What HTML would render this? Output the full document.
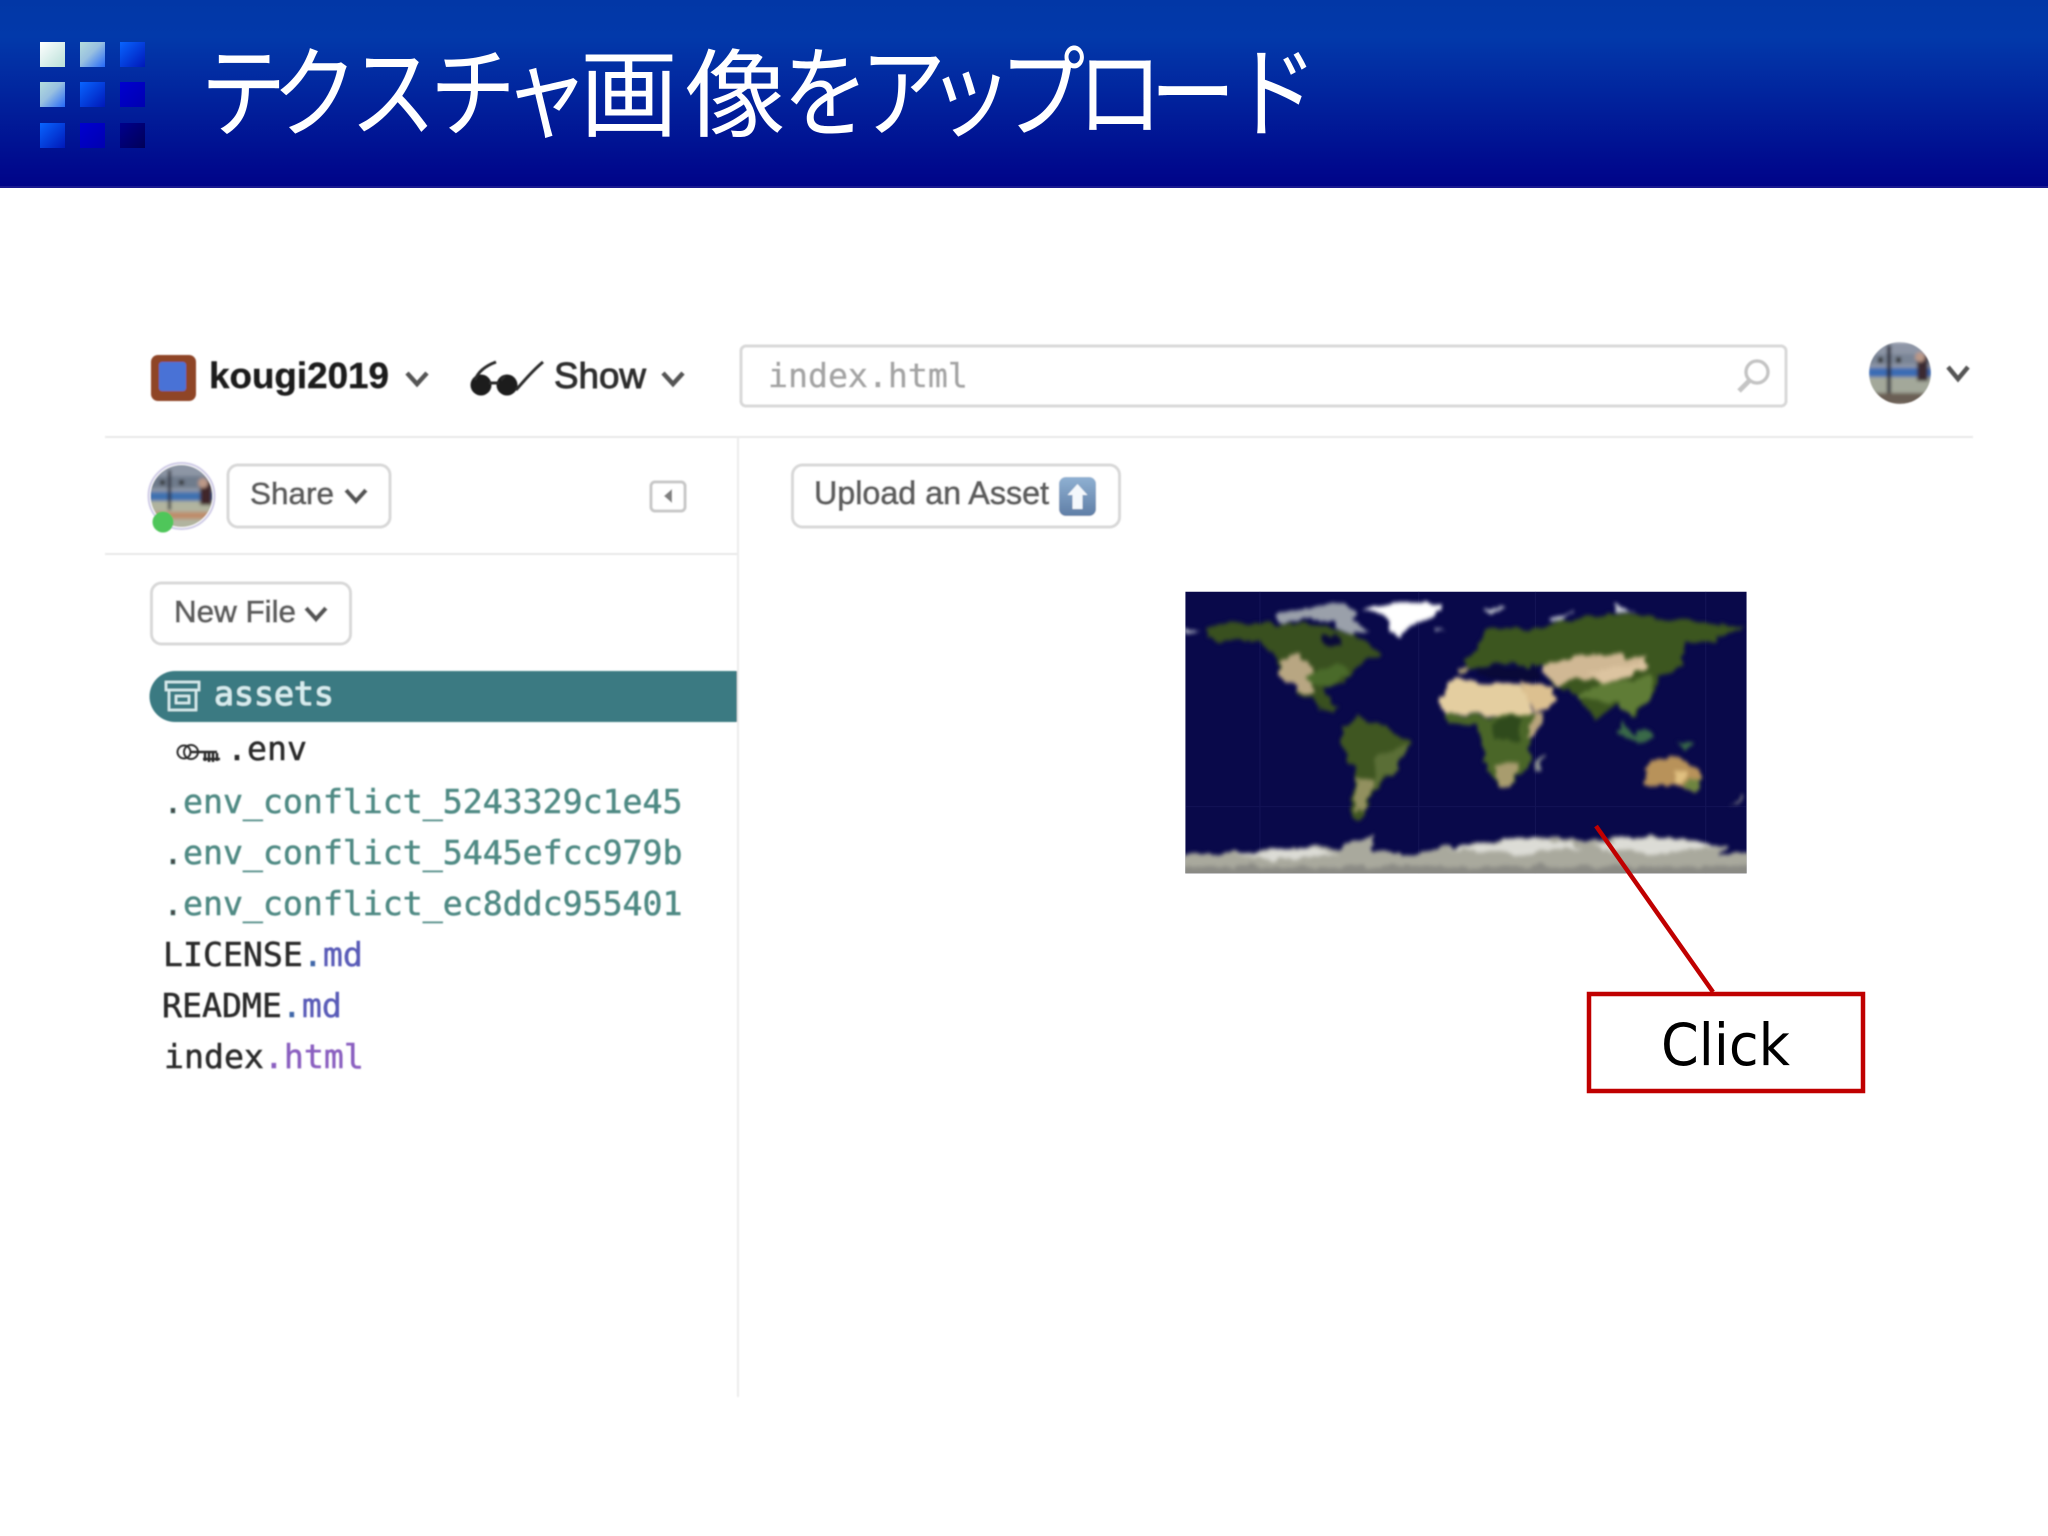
<!DOCTYPE html>
<html lang="ja"><head><meta charset="utf-8"><title>テクスチャ画像をアップロード</title>
<style>
html,body{margin:0;padding:0;background:#fff;width:2048px;height:1536px;overflow:hidden}
svg{display:block;position:absolute;left:0;top:0}
.s{font-family:"Liberation Sans",sans-serif}
.m{font-family:"DejaVu Sans Mono","Liberation Mono",monospace;font-size:33.2px;stroke-width:.5px}
.j{font-family:"Noto Sans CJK JP","Liberation Sans",sans-serif;fill:#fff}
</style></head><body>
<svg width="2048" height="1536" viewBox="0 0 2048 1536" xmlns="http://www.w3.org/2000/svg">
<defs>
<linearGradient id="hd" x1="0" y1="0" x2="0" y2="1"><stop offset="0" stop-color="#0237a6"/><stop offset=".2" stop-color="#0239aa"/><stop offset=".92" stop-color="#00088c"/><stop offset="1" stop-color="#000488"/></linearGradient>
<linearGradient id="a1" x1="0" y1="0" x2="1" y2="1"><stop offset="0" stop-color="#fff"/><stop offset="1" stop-color="#b8e0d8"/></linearGradient>
<linearGradient id="a2" x1="0" y1="0" x2="1" y2="1"><stop offset="0" stop-color="#b4dcdc"/><stop offset=".45" stop-color="#98c0e0"/><stop offset="1" stop-color="#2468f8"/></linearGradient>
<linearGradient id="a3" x1="0" y1="0" x2="1" y2="1"><stop offset="0" stop-color="#0864ff"/><stop offset="1" stop-color="#0018b8"/></linearGradient>
<linearGradient id="a4" x1="0" y1="0" x2="1" y2="1"><stop offset="0" stop-color="#0000d0"/><stop offset="1" stop-color="#0000b0"/></linearGradient>
<linearGradient id="a5" x1="0" y1="0" x2="1" y2="1"><stop offset="0" stop-color="#00008c"/><stop offset="1" stop-color="#000058"/></linearGradient>
<linearGradient id="up" x1="0" y1="0" x2="0" y2="1"><stop offset="0" stop-color="#8fb0d2"/><stop offset="1" stop-color="#5f7ea6"/></linearGradient>
<filter id="b1" x="-2%" y="-2%" width="104%" height="104%"><feGaussianBlur stdDeviation=".85"/></filter>
<filter id="b3" x="-10%" y="-10%" width="120%" height="120%"><feGaussianBlur stdDeviation="1.6"/></filter>
<filter id="b2" x="-5%" y="-5%" width="110%" height="110%" color-interpolation-filters="sRGB">
<feTurbulence type="fractalNoise" baseFrequency=".022 .03" numOctaves="3" seed="7" result="n"/>
<feDisplacementMap in="SourceGraphic" in2="n" scale="34" xChannelSelector="R" yChannelSelector="G"/>
<feGaussianBlur stdDeviation="5 6"/></filter>
<clipPath id="mp"><rect x="40" y="35" width="1467" height="845"/></clipPath>
<clipPath id="c1"><circle cx="181.5" cy="496" r="31"/></clipPath>
<clipPath id="c2"><circle cx="1900" cy="373" r="31"/></clipPath>
</defs>

<!-- header -->
<rect x="0" y="0" width="2048" height="187" fill="url(#hd)"/>
<rect x="0" y="186" width="2048" height="2" fill="#1a1a90"/>
<rect x="40" y="42" width="25" height="25" fill="url(#a1)"/><rect x="80" y="42" width="25" height="25" fill="url(#a2)"/><rect x="120" y="42" width="25" height="25" fill="url(#a3)"/>
<rect x="40" y="82" width="25" height="25" fill="url(#a2)"/><rect x="80" y="82" width="25" height="25" fill="url(#a3)"/><rect x="120" y="82" width="25" height="25" fill="url(#a4)"/>
<rect x="40" y="123" width="25" height="25" fill="url(#a3)"/><rect x="80" y="123" width="25" height="25" fill="url(#a4)"/><rect x="120" y="123" width="25" height="25" fill="url(#a5)"/>
<text class="j" transform="scale(.86 1)" y="129" x="233 316 407 500 585" font-size="100">テクスチャ</text>
<text class="j" transform="translate(580 0) scale(1.02 1)" y="129" x="0" font-size="96">画</text>
<text class="j" transform="translate(685 0) scale(1.05 1)" y="129" x="0" font-size="96">像</text>
<text class="j" transform="scale(.86 1)" y="129" x="910 1000 1078 1162 1252 1337 1432" font-size="100">をアップロード</text>

<!-- app -->
<g filter="url(#b1)">
<rect x="105" y="436" width="1868" height="2" fill="#e8e8e8"/>
<rect x="105" y="553" width="633" height="2" fill="#e8e8e8"/>
<rect x="737" y="437" width="2" height="960" fill="#ececec"/>

<rect x="151" y="355" width="45" height="46" rx="7" fill="#8f4527"/>
<rect x="159" y="362" width="27" height="29" rx="3" fill="#4a72d6"/>
<text class="s" x="209" y="388" font-size="36" font-weight="700" fill="#1c1c1c" stroke="#1c1c1c" stroke-width=".4" textLength="180" lengthAdjust="spacingAndGlyphs">kougi2019</text>
<path d="M407 373l10 11 10-11" fill="none" stroke="#555" stroke-width="4.500"/>

<circle cx="481" cy="385" r="10.500" fill="#1e1e1e"/><circle cx="507" cy="385" r="10.500" fill="#1e1e1e"/>
<path d="M475 380c3-8 10-14 21-18M501 380l4-4M516 390c8-9 16-19 27-28M489 383h10" fill="none" stroke="#2a2a2a" stroke-width="3"/>
<text class="s" x="554" y="388" font-size="36" fill="#2e2e2e" stroke="#2e2e2e" stroke-width=".9" textLength="92" lengthAdjust="spacingAndGlyphs">Show</text>
<path d="M663 373l10 11 10-11" fill="none" stroke="#555" stroke-width="4.500"/>

<rect x="741" y="346" width="1045" height="60" rx="5" fill="#fff" stroke="#d8d8d8" stroke-width="3"/>
<text class="m" x="768" y="387" fill="#a4a4a4" stroke="#a4a4a4">index.html</text>
<circle cx="1757" cy="372" r="11" fill="none" stroke="#c4c4c4" stroke-width="3.500"/>
<path d="M1749 381l-10 10" stroke="#c4c4c4" stroke-width="5" fill="none"/>

<g clip-path="url(#c2)"><g filter="url(#b3)">
<rect x="1868" y="342" width="64" height="62" fill="#8d95a6"/>
<rect x="1868" y="354" width="64" height="10" fill="#7a8596"/>
<rect x="1868" y="368" width="64" height="9" fill="#3a6cb4"/>
<rect x="1868" y="377" width="64" height="28" fill="#a3a89a"/>
<rect x="1887" y="345" width="4" height="50" fill="#2c2c38"/><rect x="1878" y="357" width="5" height="6" fill="#333"/><rect x="1896" y="357" width="5" height="6" fill="#333"/>
<rect x="1917" y="355" width="11" height="26" fill="#3a2a30"/><circle cx="1920" cy="357" r="5" fill="#b98"/>
<rect x="1868" y="393" width="64" height="12" fill="#6b5f55"/>
</g></g>
<path d="M1948 367l10 12 10-12" fill="none" stroke="#555" stroke-width="4.500"/>

<circle cx="181.5" cy="496" r="33" fill="#fff" stroke="#cfcbe6" stroke-width="2"/>
<g clip-path="url(#c1)"><g filter="url(#b3)">
<rect x="148" y="462" width="68" height="68" fill="#8d96a5"/>
<rect x="148" y="476" width="68" height="12" fill="#6f7b8c"/>
<rect x="148" y="492" width="68" height="9" fill="#3f72b0"/>
<rect x="148" y="501" width="68" height="30" fill="#b1b49f"/>
<rect x="168" y="470" width="3" height="40" fill="#2c2c38"/><rect x="160" y="480" width="5" height="5" fill="#333"/><rect x="179" y="480" width="5" height="5" fill="#333"/>
<rect x="200" y="481" width="12" height="24" fill="#40282c"/><circle cx="203" cy="483" r="5" fill="#b98"/>
<rect x="155" y="512" width="60" height="7" fill="#c27a55" opacity=".7"/>
</g></g>
<circle cx="163" cy="522" r="10.500" fill="#4fc65a"/>

<rect x="228" y="465" width="162" height="62" rx="10" fill="#fff" stroke="#d8d8d8" stroke-width="3"/>
<text class="s" x="250" y="504" font-size="31" fill="#5e5e5e" stroke="#5e5e5e" stroke-width=".9" textLength="84" lengthAdjust="spacingAndGlyphs">Share</text>
<path d="M346 490l10 11 10-11" fill="none" stroke="#555" stroke-width="4.500"/>

<rect x="651" y="482" width="34" height="29" rx="4" fill="#fff" stroke="#c8c8c8" stroke-width="3"/>
<path d="M672 489v14l-8-7z" fill="#808080"/>

<rect x="151.500" y="583" width="199" height="61" rx="10" fill="#fff" stroke="#d8d8d8" stroke-width="3"/>
<text class="s" x="174" y="622" font-size="31" fill="#5e5e5e" stroke="#5e5e5e" stroke-width=".9" textLength="122" lengthAdjust="spacingAndGlyphs">New File</text>
<path d="M306 608l10 11 10-11" fill="none" stroke="#555" stroke-width="4.500"/>

<path d="M175 671H737V722H175a25.500 25.500 0 0 1 0-51z" fill="#3a7a82"/>
<path d="M166 682h33v8h-33zM169 690v20h27v-20M176 696h13v7h-13z" fill="none" stroke="#d8ecee" stroke-width="2.500"/>
<text class="m" x="214" y="705" fill="#d7ecee" stroke="#d7ecee" style="stroke-width:.8px">assets</text>

<circle cx="184" cy="752" r="6.500" fill="none" stroke="#2c2c2c" stroke-width="2"/><circle cx="191" cy="752" r="7" fill="none" stroke="#2c2c2c" stroke-width="2"/>
<path d="M190 752h27M205 753v8M209 753v9M213 753v9M217 753v8M203 759h17" stroke="#2c2c2c" stroke-width="2.500" fill="none"/>
<text class="m" x="227" y="760" fill="#2c2c2c" stroke="#2c2c2c">.env</text>

<text class="m" y="813" x="163" fill="#4f8a84" stroke="#4f8a84"><tspan fill="#444">.</tspan>env_conflict_5243329c1e45</text>
<text class="m" y="864" x="163" fill="#4f8a84" stroke="#4f8a84"><tspan fill="#444">.</tspan>env_conflict_5445efcc979b</text>
<text class="m" y="915" x="163" fill="#4f8a84" stroke="#4f8a84"><tspan fill="#444">.</tspan>env_conflict_ec8ddc955401</text>
<text class="m" y="966" x="163" fill="#2c2c2c" stroke="#2c2c2c">LICENSE<tspan fill="#3f66a8" stroke="#3f66a8">.</tspan><tspan fill="#5a5cb8" stroke="#5a5cb8">md</tspan></text>
<text class="m" y="1017" x="162" fill="#2c2c2c" stroke="#2c2c2c">README<tspan fill="#3f66a8" stroke="#3f66a8">.</tspan><tspan fill="#5a5cb8" stroke="#5a5cb8">md</tspan></text>
<text class="m" y="1068" x="164" fill="#2c2c2c" stroke="#2c2c2c">index<tspan fill="#8a5fc0" stroke="#8a5fc0">.html</tspan></text>

<rect x="792.500" y="465" width="327" height="62" rx="10" fill="#fff" stroke="#d8d8d8" stroke-width="3"/>
<text class="s" x="814" y="504" font-size="32" fill="#5e5e5e" stroke="#5e5e5e" stroke-width=".9" textLength="235" lengthAdjust="spacingAndGlyphs">Upload an Asset</text>
<rect x="1059" y="477" width="37" height="39" rx="7" fill="url(#up)"/>
<path d="M1077.500 484l10 11h-5v14h-10v-14h-5z" fill="#f4f8fc"/>
</g>

<!-- world map, authored in the crop's coordinates -->
<svg x="1170" y="580" width="600" height="320" viewBox="0 0 1568 960" preserveAspectRatio="none">
<g clip-path="url(#mp)">
<rect x="40" y="35" width="1467" height="845" fill="#09094a"/>
<path d="M235 35V880M650 35V880M955 35V880M1400 35V880M40 680H1507" stroke="#2a2a70" stroke-width="3" opacity=".3" fill="none"/>
<g filter="url(#b2)">
<path d="M500 85 600 66 715 72 690 105 640 130 600 175 575 150 560 105Z" fill="#fff"/>
<path d="M270 110 330 85 460 72 490 100 470 120 520 150 470 165 420 125 350 120 290 130Z" fill="#9aa0aa"/>
<path d="M815 85 885 82 850 100ZM990 122 1050 95 1020 128ZM1150 75 1225 100 1160 95ZM40 140 80 150 45 158ZM690 150 720 155 690 160Z" fill="#c8ccd4"/>
<path d="M95 140 170 125 270 135 340 130 420 140 460 160 510 180 550 230 480 260 450 310 400 330 440 380 430 405 375 365 340 340 290 280 270 215 210 175 130 185 100 170Z" fill="#39501f"/>
<path d="M395 165 440 165 450 195 410 195Z" fill="#090938"/>
<path d="M285 240 340 215 375 270 370 340 335 335 290 285Z" fill="#b8a682"/>
<path d="M355 290 440 250 470 270 420 320 370 320Z" fill="#4a6a2a"/>
<path d="M450 450 490 405 540 425 630 490 590 570 530 630 510 710 490 720 470 690 490 580 450 510Z" fill="#3f5621"/>
<path d="M540 520 625 495 590 570 530 620Z" fill="#5a6e36"/>
<path d="M490 590 530 600 510 700 480 690Z" fill="#92905f"/>
<path d="M770 240 830 150 960 140 1060 120 1150 100 1300 115 1505 140 1420 180 1340 190 1340 260 1280 290 1260 350 1210 410 1170 370 1110 420 1070 340 1000 320 980 260 870 255 790 265Z" fill="#3c561f"/>
<path d="M985 250 1100 225 1250 230 1240 270 1130 315 1060 290 1010 320 980 280Z" fill="#d0b894"/>
<path d="M1080 280 1245 245 1225 275 1130 315Z" fill="#dcc4a0"/>
<path d="M745 265 790 260 770 285 745 285Z" fill="#a89a72"/>
<path d="M1140 310 1260 290 1260 350 1200 410 1170 365 1110 370 1070 340Z" fill="#5f7c36"/>
<path d="M800 265 960 262 975 300 880 300 800 285Z" fill="#090938"/>
<path d="M715 400 840 410 945 400 985 400 940 480 940 540 890 620 860 620 820 540 810 440 730 430Z" fill="#4a6628"/>
<path d="M840 420 920 415 910 480 850 480Z" fill="#2f4a1c"/>
<path d="M705 350 745 295 825 310 920 320 955 395 900 410 720 400Z" fill="#e4cea0"/>
<path d="M920 300 1000 330 1015 365 960 395 925 340Z" fill="#dcc090"/>
<path d="M950 395 985 400 950 470 930 470Z" fill="#b8a47c"/>
<path d="M850 560 920 540 890 620 860 620Z" fill="#a89c6e"/>
<path d="M955 550 980 525 968 580 952 580Z" fill="#8a8f90"/>
<path d="M1180 420 1215 470 1245 440 1260 470 1215 495 1175 460ZM1330 480 1370 490 1350 505Z" fill="#3a6a48"/>
<path d="M1235 570 1300 520 1350 540 1395 590 1375 640 1320 610 1250 620Z" fill="#b8925a"/>
<path d="M1320 570 1345 570 1345 610 1320 610Z" fill="#e0c080"/>
<path d="M1355 600 1395 590 1375 640 1345 620Z" fill="#6e8540"/>
<path d="M1460 678 1495 640 1490 660Z" fill="#888"/>
<path d="M0 825 180 815 360 800 450 800 510 775 535 760 535 820 660 820 730 795 980 770 1100 785 1180 770 1330 775 1465 800 1440 825 1560 825 1560 920 0 920Z" fill="#a9a99d"/>
<path d="M160 820 350 805 450 820 300 840ZM730 800 980 775 1080 800 900 825ZM1100 800 1180 775 1330 780 1440 800 1250 820Z" fill="#dcdcd6"/>
<path d="M0 860 1560 860 1560 920 0 920Z" fill="#8a8a84"/>
</g>
</g>
</svg>

<path d="M1596 826 1713 992" stroke="#c00000" stroke-width="4.500" fill="none"/>
<rect x="1589" y="994" width="274" height="97" fill="#fff" stroke="#c00000" stroke-width="4.500"/>
<text x="1661" y="1065" font-size="58" fill="#000" style="font-family:'DejaVu Sans',sans-serif" textLength="129" lengthAdjust="spacingAndGlyphs">Click</text>
</svg>
</body></html>
